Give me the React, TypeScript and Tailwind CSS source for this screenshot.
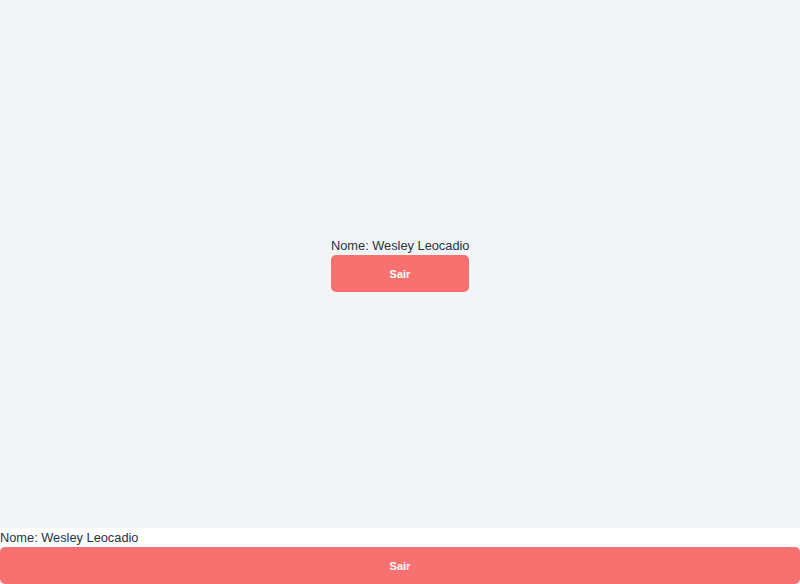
const Profile = ({ full }: { full?: boolean }) => {
  return (
    <div className={full ? "w-full flex flex-col" : "w-[138px] flex flex-col"}>
      <span className="text-[12.8px] leading-[19px] text-[#213547] whitespace-nowrap">
        Nome: Wesley Leocadio
      </span>
      <button className="w-full h-[37px] rounded-[5px] bg-[#f87171] text-white text-[11px] leading-[14px] pt-px font-bold">
        Sair
      </button>
    </div>
  );
};

export default function App() {
  return (
    <div className="w-full bg-white font-['Liberation_Sans',Arial,sans-serif]">
      <div className="h-[528px] bg-[#f3f4f6] flex items-center justify-center">
        <Profile />
      </div>
      <Profile full />
    </div>
  );
}
